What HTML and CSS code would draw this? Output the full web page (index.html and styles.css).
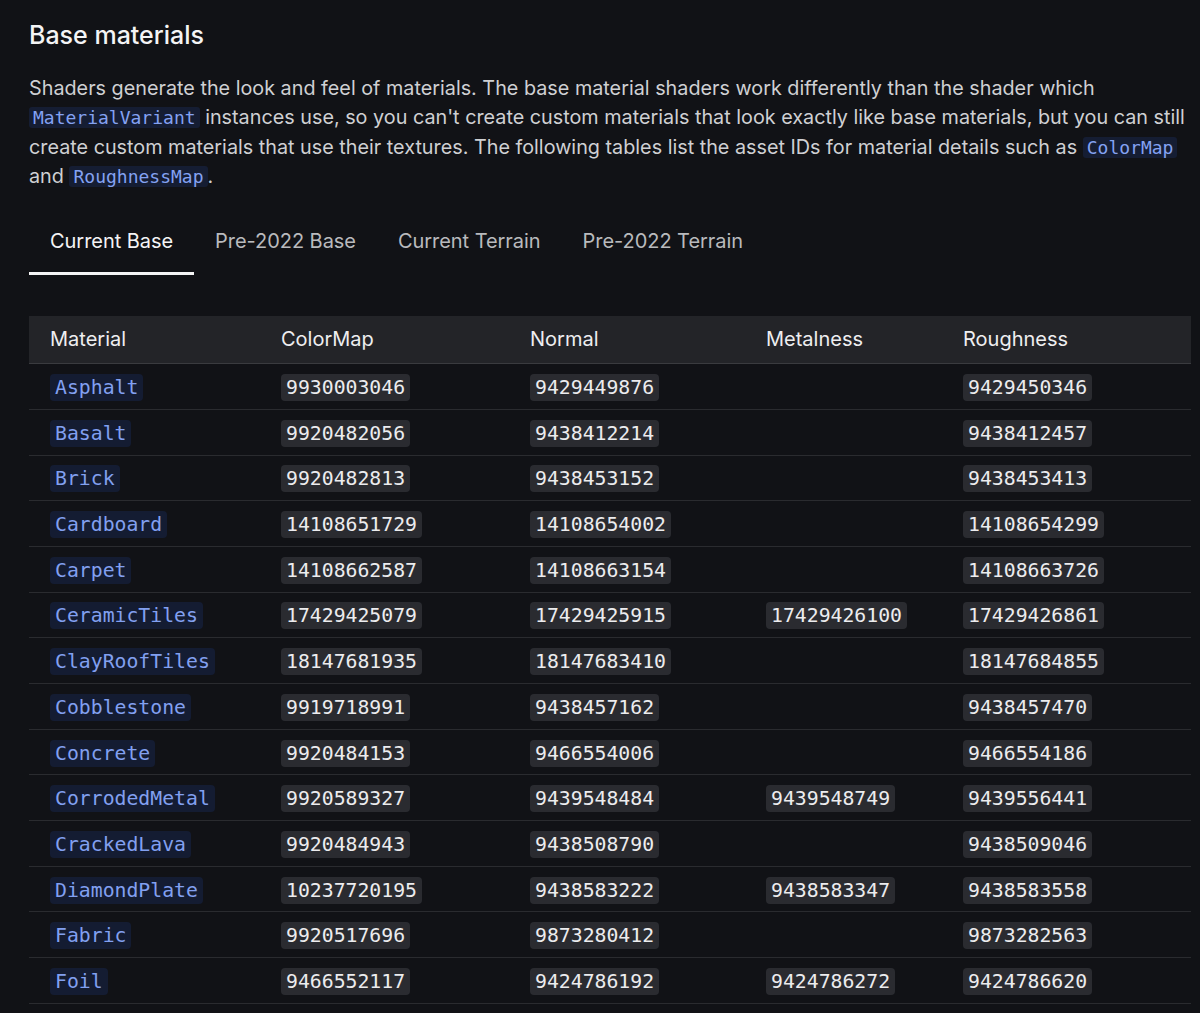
FILE: index.html
```html
<!DOCTYPE html>
<html lang="en">
<head>
<meta charset="utf-8">
<title>Base materials</title>
<link rel="stylesheet" href="styles.css">
</head>
<body>
<main class="page">
  <h2 class="title">Base materials</h2>
  <p class="intro">Shaders generate the look and feel of materials. The base material shaders work differently than the shader which <code class="ic">MaterialVariant</code> instances use, so you can't create custom materials that look exactly like base materials, but you can still create custom materials that use their textures. The following tables list the asset IDs for material details such as <code class="ic">ColorMap</code> and <code class="ic">RoughnessMap</code>.</p>

  <div class="tabs">
    <div class="tab active">Current Base</div>
    <div class="tab">Pre-2022 Base</div>
    <div class="tab">Current Terrain</div>
    <div class="tab">Pre-2022 Terrain</div>
  </div>

  <table class="tbl">
    <colgroup>
      <col class="c1"><col class="c2"><col class="c3"><col class="c4"><col class="c5">
    </colgroup>
    <thead>
      <tr><th>Material</th><th>ColorMap</th><th>Normal</th><th>Metalness</th><th>Roughness</th></tr>
    </thead>
    <tbody>
      <tr><td><code class="mat">Asphalt</code></td><td><code class="id">9930003046</code></td><td><code class="id">9429449876</code></td><td></td><td><code class="id">9429450346</code></td></tr>
      <tr><td><code class="mat">Basalt</code></td><td><code class="id">9920482056</code></td><td><code class="id">9438412214</code></td><td></td><td><code class="id">9438412457</code></td></tr>
      <tr><td><code class="mat">Brick</code></td><td><code class="id">9920482813</code></td><td><code class="id">9438453152</code></td><td></td><td><code class="id">9438453413</code></td></tr>
      <tr><td><code class="mat">Cardboard</code></td><td><code class="id">14108651729</code></td><td><code class="id">14108654002</code></td><td></td><td><code class="id">14108654299</code></td></tr>
      <tr><td><code class="mat">Carpet</code></td><td><code class="id">14108662587</code></td><td><code class="id">14108663154</code></td><td></td><td><code class="id">14108663726</code></td></tr>
      <tr><td><code class="mat">CeramicTiles</code></td><td><code class="id">17429425079</code></td><td><code class="id">17429425915</code></td><td><code class="id">17429426100</code></td><td><code class="id">17429426861</code></td></tr>
      <tr><td><code class="mat">ClayRoofTiles</code></td><td><code class="id">18147681935</code></td><td><code class="id">18147683410</code></td><td></td><td><code class="id">18147684855</code></td></tr>
      <tr><td><code class="mat">Cobblestone</code></td><td><code class="id">9919718991</code></td><td><code class="id">9438457162</code></td><td></td><td><code class="id">9438457470</code></td></tr>
      <tr><td><code class="mat">Concrete</code></td><td><code class="id">9920484153</code></td><td><code class="id">9466554006</code></td><td></td><td><code class="id">9466554186</code></td></tr>
      <tr><td><code class="mat">CorrodedMetal</code></td><td><code class="id">9920589327</code></td><td><code class="id">9439548484</code></td><td><code class="id">9439548749</code></td><td><code class="id">9439556441</code></td></tr>
      <tr><td><code class="mat">CrackedLava</code></td><td><code class="id">9920484943</code></td><td><code class="id">9438508790</code></td><td></td><td><code class="id">9438509046</code></td></tr>
      <tr><td><code class="mat">DiamondPlate</code></td><td><code class="id">10237720195</code></td><td><code class="id">9438583222</code></td><td><code class="id">9438583347</code></td><td><code class="id">9438583558</code></td></tr>
      <tr><td><code class="mat">Fabric</code></td><td><code class="id">9920517696</code></td><td><code class="id">9873280412</code></td><td></td><td><code class="id">9873282563</code></td></tr>
      <tr><td><code class="mat">Foil</code></td><td><code class="id">9466552117</code></td><td><code class="id">9424786192</code></td><td><code class="id">9424786272</code></td><td><code class="id">9424786620</code></td></tr>
    </tbody>
  </table>
</main>
</body>
</html>
```

FILE: styles.css
```css
html, body {
  margin: 0;
  padding: 0;
  background: #111216;
}
body {
  font-family: Inter, "Noto Sans", "Liberation Sans", sans-serif;
  color: #d4d4d6;
}
.page {
  padding: 18px 0 0 29px;
}
.title {
  margin: 0;
  font-size: 25px;
  font-weight: 500;
  line-height: 34px;
  color: #f4f4f5;
}
.intro {
  margin: 22px 0 0;
  font-size: 19.8px;
  line-height: 29.3px;
  color: #cfd0d3;
}
.ic {
  font-family: "DejaVu Sans Mono", "Liberation Mono", monospace;
  font-size: 18px;
  line-height: 20px;
  color: #84a2f2;
  background: #151d33;
  border-radius: 3px;
  padding: 0 4px;
}
.tabs {
  display: flex;
  margin-top: 26px;
}
.tab {
  padding: 10px 21px 17px;
  font-size: 20px;
  letter-spacing: -0.05px;
  line-height: 28px;
  color: #b9babd;
  border-bottom: 3px solid transparent;
}
.tab.active {
  color: #f4f4f5;
  border-bottom-color: #f4f4f5;
}
.tbl {
  margin-top: 41px;
  width: 1162px;
  border-collapse: collapse;
  table-layout: fixed;
}
.c1 { width: 231px; }
.c2 { width: 249px; }
.c3 { width: 236px; }
.c4 { width: 197px; }
.c5 { width: 249px; }
.tbl th {
  background: #232428;
  height: 46px;
  padding: 0 21px 1px;
  text-align: left;
  font-weight: 400;
  font-size: 20px;
  color: #eeeef0;
  border-bottom: 1px solid #3a3b3f;
}
.tbl td {
  height: 42.7px;
  padding: 2px 21px 0;
  border-bottom: 1px solid #2a2b2f;
  vertical-align: middle;
}
.mat, .id {
  display: inline-block;
  font-family: "DejaVu Sans Mono", "Liberation Mono", monospace;
  font-size: 19.8px;
  line-height: 27px;
  padding: 0 5px;
  border-radius: 4px;
}
.mat {
  color: #82a0f0;
  background: #141c32;
}
.id {
  color: #ececee;
  background: #2a2b30;
}
```
